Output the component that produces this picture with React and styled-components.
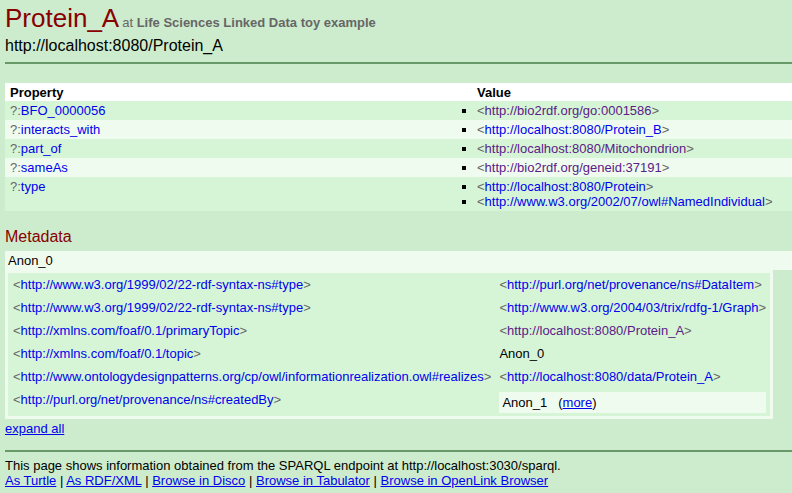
import React from 'react'
import styled, { createGlobalStyle } from 'styled-components'

const GlobalStyle = createGlobalStyle`
  html, body {
    margin: 0;
    padding: 0;
  }
  body {
    background: #cdeccd;
    font-family: "Liberation Sans", Arial, sans-serif;
    font-size: 13px;
    line-height: 15px;
    color: #000;
    overflow: hidden;
  }
`

const Page = styled.div`
  padding-left: 5px;
`

const Header = styled.div`
  padding: 3px 0 7px;
  border-bottom: 2px solid #699869;
`

const TitleRow = styled.div`
  display: flex;
  align-items: baseline;
`

const Title = styled.h1`
  margin: 0;
  font-size: 26px;
  line-height: 30px;
  font-weight: normal;
  color: #880000;
`

const Dataset = styled.span`
  margin-left: 3px;
  color: #666;
  font-size: 13px;
  b {
    font-weight: bold;
  }
`

const PageUri = styled.div`
  margin-top: 4px;
  font-size: 16px;
  line-height: 18px;
`

const Table = styled.table`
  width: 100%;
  margin-top: 19px;
  border-collapse: collapse;
`

const Th = styled.th`
  background: #fff;
  text-align: left;
  font-weight: bold;
  padding: 2px 5px 1px;
  width: ${p => p.$width || 'auto'};
`

const Row = styled.tr`
  background: ${p => (p.$even ? '#f0fbf0' : '#d6f5d6')};
`

const Td = styled.td`
  padding: 2px 5px;
  vertical-align: top;
`

const ValueList = styled.ul`
  margin: 0;
  padding: 0;
  list-style: square outside;
`

const Link = styled.a`
  color: ${p => (p.$visited ? '#5a2088' : '#0000ee')};
  text-decoration: ${p => (p.$underline ? 'underline' : 'none')};
  cursor: pointer;
`

const Gray = styled.span`
  color: #666;
`

const SectionTitle = styled.h2`
  margin: 16px 0 4px;
  font-size: 16px;
  line-height: 20px;
  font-weight: normal;
  color: #880000;
`

const AnonHead = styled.div`
  background: #f0fbf0;
  padding: 2px 3px;
`

const MetaBox = styled.table`
  border: 3px solid #f0fbf0;
  background: #d6f5d6;
  border-collapse: separate;
  border-spacing: 0;
`

const MetaTd = styled.td`
  padding: 4px 4px 3px 4px;
  line-height: 16px;
  vertical-align: top;
  white-space: nowrap;
  &:first-child {
    padding-left: 5px;
  }
`

const Blank = styled.div`
  background: #f0fbf0;
  padding: 3px;
  line-height: 15px;
`

const More = styled.span`
  margin-left: 11px;
`

const Expand = styled.div`
  margin-top: 2px;
  line-height: 15px;
`

const Footer = styled.div`
  margin-top: 14px;
  border-top: 2px solid #699869;
  padding-top: 6px;
`

const Uri = ({ href, visited }) => (
  <span>
    <Gray>&lt;</Gray>
    <Link $visited={visited}>{href}</Link>
    <Gray>&gt;</Gray>
  </span>
)

const properties = [
  { name: 'BFO_0000056', values: [{ href: 'http://bio2rdf.org/go:0001586', visited: true }] },
  { name: 'interacts_with', values: [{ href: 'http://localhost:8080/Protein_B' }] },
  { name: 'part_of', values: [{ href: 'http://localhost:8080/Mitochondrion', visited: true }] },
  { name: 'sameAs', values: [{ href: 'http://bio2rdf.org/geneid:37191', visited: true }] },
  {
    name: 'type',
    values: [
      { href: 'http://localhost:8080/Protein' },
      { href: 'http://www.w3.org/2002/07/owl#NamedIndividual' },
    ],
  },
]

const metadata = [
  ['http://www.w3.org/1999/02/22-rdf-syntax-ns#type', { href: 'http://purl.org/net/provenance/ns#DataItem' }],
  ['http://www.w3.org/1999/02/22-rdf-syntax-ns#type', { href: 'http://www.w3.org/2004/03/trix/rdfg-1/Graph' }],
  ['http://xmlns.com/foaf/0.1/primaryTopic', { href: 'http://localhost:8080/Protein_A', visited: true }],
  ['http://xmlns.com/foaf/0.1/topic', { text: 'Anon_0' }],
  ['http://www.ontologydesignpatterns.org/cp/owl/informationrealization.owl#realizes', { href: 'http://localhost:8080/data/Protein_A' }],
  ['http://purl.org/net/provenance/ns#createdBy', { blank: 'Anon_1' }],
]

const footerLinks = ['As Turtle', 'As RDF/XML', 'Browse in Disco', 'Browse in Tabulator', 'Browse in OpenLink Browser']

const renderMetaValue = v => {
  if (v.href) return <Uri href={v.href} visited={v.visited} />
  if (v.text) return v.text
  return (
    <Blank>
      {v.blank}
      <More>(<Link $underline>more</Link>)</More>
    </Blank>
  )
}

export default function App() {
  return (
    <Page>
      <GlobalStyle />
      <Header>
        <TitleRow>
          <Title>Protein_A</Title>
          <Dataset>at <b>Life Sciences Linked Data toy example</b></Dataset>
        </TitleRow>
        <PageUri>http://localhost:8080/Protein_A</PageUri>
      </Header>

      <Table>
        <thead>
          <tr>
            <Th $width="457px">Property</Th>
            <Th>Value</Th>
          </tr>
        </thead>
        <tbody>
          {properties.map((p, i) => (
            <Row key={p.name} $even={i % 2 === 1}>
              <Td>
                <Gray>?:</Gray>
                <Link>{p.name}</Link>
              </Td>
              <Td>
                <ValueList>
                  {p.values.map(v => (
                    <li key={v.href}>
                      <Uri href={v.href} visited={v.visited} />
                    </li>
                  ))}
                </ValueList>
              </Td>
            </Row>
          ))}
        </tbody>
      </Table>

      <SectionTitle>Metadata</SectionTitle>
      <AnonHead>Anon_0</AnonHead>
      <MetaBox>
        <tbody>
          {metadata.map(([pred, val], i) => (
            <tr key={i}>
              <MetaTd><Uri href={pred} /></MetaTd>
              <MetaTd>{renderMetaValue(val)}</MetaTd>
            </tr>
          ))}
        </tbody>
      </MetaBox>
      <Expand><Link $underline>expand all</Link></Expand>

      <Footer>
        <div>This page shows information obtained from the SPARQL endpoint at http://localhost:3030/sparql.</div>
        <div>
          {footerLinks.map((l, i) => (
            <React.Fragment key={l}>
              {i > 0 && ' | '}
              <Link $underline>{l}</Link>
            </React.Fragment>
          ))}
        </div>
      </Footer>
    </Page>
  )
}
